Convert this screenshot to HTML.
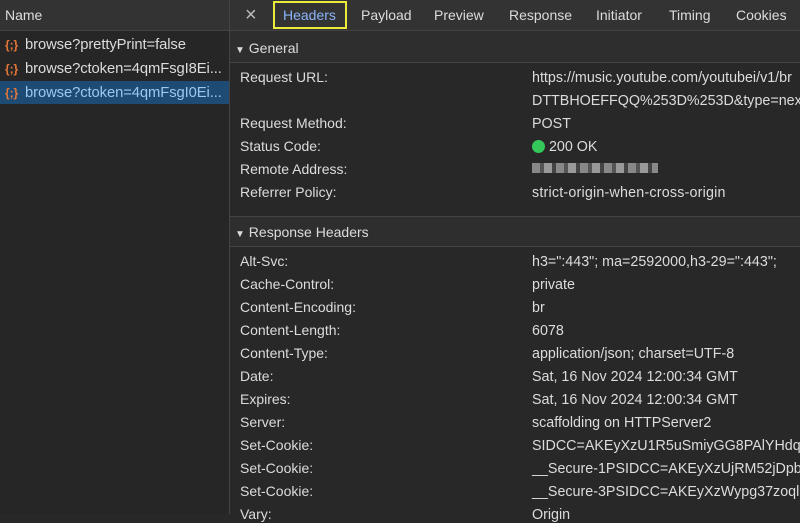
<!DOCTYPE html><html><head><style>
body{margin:0;width:800px;height:514px;overflow:hidden;background:#282828;font-family:"Liberation Sans",sans-serif;font-size:14px;color:#dcdcdc;position:relative}
.a{position:absolute;white-space:nowrap}
.v{font-size:14.3px;margin-top:1px}
#left{position:absolute;left:0;top:0;width:229px;height:514px;background:#262626;border-right:1px solid #444}
#top{position:absolute;left:0;top:0;width:800px;height:30px;background:#333;border-bottom:1px solid #444}
.ic{color:#e8773a;font-size:12px;font-weight:bold;display:inline-block;width:20px}
.l{font-size:14.8px;letter-spacing:-0.1px}
.hl{position:absolute;left:230px;width:570px;height:1px;background:#444}
.sec{position:absolute;left:230px;width:570px;background:#2e2e2e}
</style></head><body>
<div id="left"></div>
<div id="top"></div>
<div class="a" style="left:229px;top:0;width:1px;height:30px;background:#444"></div>
<div class="a" style="left:5px;top:7px;color:#ddd">Name</div>
<div class="a" style="left:0;top:81px;width:229px;height:23px;background:#1d4b73"></div>
<div class="a l" style="left:5px;top:37px"><span class="ic">{;}</span>browse?prettyPrint=false</div>
<div class="a l" style="left:5px;top:61px"><span class="ic">{;}</span>browse?ctoken=4qmFsgI8Ei...</div>
<div class="a l" style="left:5px;top:85px;color:#9cc8f0"><span class="ic">{;}</span>browse?ctoken=4qmFsgI0Ei...</div>
<div class="a" style="left:245px;top:4px;font-size:20px;color:#bbb">×</div>
<div class="a" style="left:273px;top:1px;width:74px;height:28px;border:2px solid #ecea3a;box-sizing:border-box"></div>
<div class="a" style="left:283px;top:7px;color:#8ab4f8">Headers</div>
<div class="a" style="left:361px;top:7px">Payload</div>
<div class="a" style="left:434px;top:7px">Preview</div>
<div class="a" style="left:509px;top:7px">Response</div>
<div class="a" style="left:596px;top:7px">Initiator</div>
<div class="a" style="left:669px;top:7px">Timing</div>
<div class="a" style="left:736px;top:7px">Cookies</div>
<div class="sec" style="top:31px;height:31px"></div>
<div class="hl" style="top:62px"></div>
<div class="a" style="left:235px;top:40px"><span style="font-size:10px">▼</span> General</div>
<div class="a" style="left:240px;top:69px">Request URL:</div>
<div class="a v" style="left:532px;top:69px">https://music.youtube.com/youtubei/v1/br</div>
<div class="a v" style="left:532px;top:92px">DTTBHOEFFQQ%253D%253D&amp;type=nex</div>
<div class="a" style="left:240px;top:115px">Request Method:</div><div class="a v" style="left:532px;top:115px">POST</div>
<div class="a" style="left:240px;top:138px">Status Code:</div><div class="a v" style="left:532px;top:138px"><span style="display:inline-block;width:13px;height:13px;border-radius:50%;background:#34c759;vertical-align:-2px"></span> 200 OK</div>
<div class="a" style="left:240px;top:161px">Remote Address:</div><div class="a" style="left:532px;top:163px;width:126px;height:10px;background:repeating-linear-gradient(90deg,#888 0 8px,#555 8px 12px,#999 12px 20px,#444 20px 24px)"></div>
<div class="a" style="left:240px;top:184px">Referrer Policy:</div><div class="a v" style="left:532px;top:184px;letter-spacing:0.2px">strict-origin-when-cross-origin</div>
<div class="hl" style="top:216px"></div>
<div class="sec" style="top:217px;height:29px"></div>
<div class="hl" style="top:246px"></div>
<div class="a" style="left:235px;top:224px"><span style="font-size:10px">▼</span> Response Headers</div>
<div class="a" style="left:240px;top:253px">Alt-Svc:</div><div class="a v" style="left:532px;top:253px">h3=":443"; ma=2592000,h3-29=":443";</div>
<div class="a" style="left:240px;top:276px">Cache-Control:</div><div class="a v" style="left:532px;top:276px">private</div>
<div class="a" style="left:240px;top:299px">Content-Encoding:</div><div class="a v" style="left:532px;top:299px">br</div>
<div class="a" style="left:240px;top:322px">Content-Length:</div><div class="a v" style="left:532px;top:322px">6078</div>
<div class="a" style="left:240px;top:345px">Content-Type:</div><div class="a v" style="left:532px;top:345px">application/json; charset=UTF-8</div>
<div class="a" style="left:240px;top:368px">Date:</div><div class="a v" style="left:532px;top:368px">Sat, 16 Nov 2024 12:00:34 GMT</div>
<div class="a" style="left:240px;top:391px">Expires:</div><div class="a v" style="left:532px;top:391px">Sat, 16 Nov 2024 12:00:34 GMT</div>
<div class="a" style="left:240px;top:414px">Server:</div><div class="a v" style="left:532px;top:414px">scaffolding on HTTPServer2</div>
<div class="a" style="left:240px;top:437px">Set-Cookie:</div><div class="a v" style="left:532px;top:437px">SIDCC=AKEyXzU1R5uSmiyGG8PAlYHdqM</div>
<div class="a" style="left:240px;top:460px">Set-Cookie:</div><div class="a v" style="left:532px;top:460px">__Secure-1PSIDCC=AKEyXzUjRM52jDpb</div>
<div class="a" style="left:240px;top:483px">Set-Cookie:</div><div class="a v" style="left:532px;top:483px">__Secure-3PSIDCC=AKEyXzWypg37zoql</div>
<div class="a" style="left:240px;top:506px">Vary:</div><div class="a v" style="left:532px;top:506px">Origin</div>
</body></html>
